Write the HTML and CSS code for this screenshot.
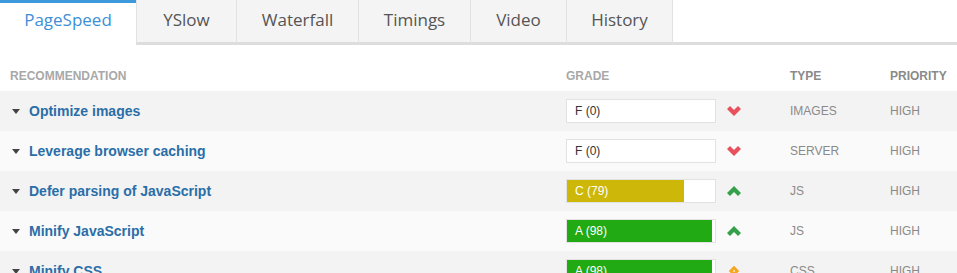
FILE: index.html
```html
<!DOCTYPE html>
<html>
<head>
<meta charset="utf-8">
<link rel="stylesheet" href="styles.css">
</head>
<body>
<nav class="tabs">
  <div class="tab active">PageSpeed</div>
  <div class="tab">YSlow</div>
  <div class="tab">Waterfall</div>
  <div class="tab">Timings</div>
  <div class="tab">Video</div>
  <div class="tab">History</div>
  <div class="tab-rest"></div>
</nav>
<div class="table">
  <div class="row head">
    <div class="c-name">Recommendation</div>
    <div class="c-grade">Grade</div>
    <div class="c-type">Type</div>
    <div class="c-prio">Priority</div>
  </div>
  <div class="row odd">
    <div class="c-name"><span class="caret"></span><a>Optimize images</a></div>
    <div class="c-grade"><div class="bar"><div class="fill" style="width:0%"></div><span class="val">F (0)</span></div>
      <svg class="ico" viewBox="0 0 16 12"><path d="M1 4 L4 1 L8 5 L12 1 L15 4 L8 11 Z" fill="#e8505b"/></svg></div>
    <div class="c-type">IMAGES</div>
    <div class="c-prio">HIGH</div>
  </div>
  <div class="row even">
    <div class="c-name"><span class="caret"></span><a>Leverage browser caching</a></div>
    <div class="c-grade"><div class="bar"><div class="fill" style="width:0%"></div><span class="val">F (0)</span></div>
      <svg class="ico" viewBox="0 0 16 12"><path d="M1 4 L4 1 L8 5 L12 1 L15 4 L8 11 Z" fill="#e8505b"/></svg></div>
    <div class="c-type">SERVER</div>
    <div class="c-prio">HIGH</div>
  </div>
  <div class="row odd">
    <div class="c-name"><span class="caret"></span><a>Defer parsing of JavaScript</a></div>
    <div class="c-grade"><div class="bar"><div class="fill c" style="width:79%"></div><span class="val light">C (79)</span></div>
      <svg class="ico" viewBox="0 0 16 12"><path d="M1 8 L8 1 L15 8 L12 11 L8 7 L4 11 Z" fill="#35a04a"/></svg></div>
    <div class="c-type">JS</div>
    <div class="c-prio">HIGH</div>
  </div>
  <div class="row even">
    <div class="c-name"><span class="caret"></span><a>Minify JavaScript</a></div>
    <div class="c-grade"><div class="bar"><div class="fill a" style="width:98%"></div><span class="val light">A (98)</span></div>
      <svg class="ico" viewBox="0 0 16 12"><path d="M1 8 L8 1 L15 8 L12 11 L8 7 L4 11 Z" fill="#35a04a"/></svg></div>
    <div class="c-type">JS</div>
    <div class="c-prio">HIGH</div>
  </div>
  <div class="row odd">
    <div class="c-name"><span class="caret"></span><a>Minify CSS</a></div>
    <div class="c-grade"><div class="bar"><div class="fill a" style="width:98%"></div><span class="val light">A (98)</span></div>
      <svg class="ico" viewBox="0 0 16 16"><path d="M8 1 L15 8 L8 15 L1 8 Z" fill="#f5a623"/><rect x="7" y="7" width="2" height="2" fill="#fff"/></svg></div>
    <div class="c-type">CSS</div>
    <div class="c-prio">HIGH</div>
  </div>
</div>
</body>
</html>
```
FILE: styles.css
```css
* { box-sizing: border-box; }
body {
  margin: 0;
  background: #fff;
  font-family: "Liberation Sans", Arial, sans-serif;
  overflow: hidden;
}
.tabs {
  display: flex;
  height: 45px;
}
.tab {
  height: 45px;
  padding-top: 8px;
  background: #f4f4f4;
  border-bottom: 3px solid #dddddd;
  border-left: 1px solid #e2e2e2;
  color: #555;
  font-family: "Open Sans", "Noto Sans", sans-serif;
  font-size: 17px;
  text-align: center;
}
.tab:nth-child(1) { width: 136px; }
.tab:nth-child(2) { width: 100px; }
.tab:nth-child(3) { width: 122px; }
.tab:nth-child(4) { width: 112px; }
.tab:nth-child(5) { width: 96px; }
.tab:nth-child(6) { width: 106px; }
.tab.active {
  background: #fff;
  border-left: none;
  border-top: 3px solid #3d98dc;
  border-bottom: none;
  color: #3d8fd6;
  padding-top: 5px;
}
.tab-rest {
  flex: 1;
  border-bottom: 3px solid #dddddd;
  border-left: 1px solid #e2e2e2;
}
.row {
  display: grid;
  grid-template-columns: 556px 224px 100px 1fr;
  align-items: center;
  padding-left: 10px;
  height: 40px;
}
.row.head {
  height: 46px;
  padding-top: 16px;
  color: #a8a8a8;
  font-size: 12px;
  font-weight: bold;
  text-transform: uppercase;
}
.row.odd { background: #f3f3f3; }
.row.even { background: #fafafa; }
.c-name {
  display: flex;
  align-items: center;
}
.caret {
  width: 0;
  height: 0;
  border-left: 4px solid transparent;
  border-right: 4px solid transparent;
  border-top: 5px solid #444;
  margin: 0 9px 0 2px;
}
.c-name a {
  color: #2a6ea8;
  font-size: 14px;
  font-weight: bold;
}
.c-grade {
  display: flex;
  align-items: center;
}
.bar {
  position: relative;
  width: 150px;
  height: 24px;
  border: 1px solid #e2e2e2;
  background: #fff;
}
.fill { height: 100%; }
.fill.c { background: #cdb80a; }
.fill.a { background: #22aa14; }
.val {
  position: absolute;
  left: 8px;
  top: 4px;
  font-size: 12px;
  color: #333;
}
.val.light { color: #fff; }
.ico {
  width: 16px;
  height: 12px;
  margin-left: 10px;
}
.c-type, .c-prio {
  color: #8a8a8a;
  font-size: 12px;
}
```
